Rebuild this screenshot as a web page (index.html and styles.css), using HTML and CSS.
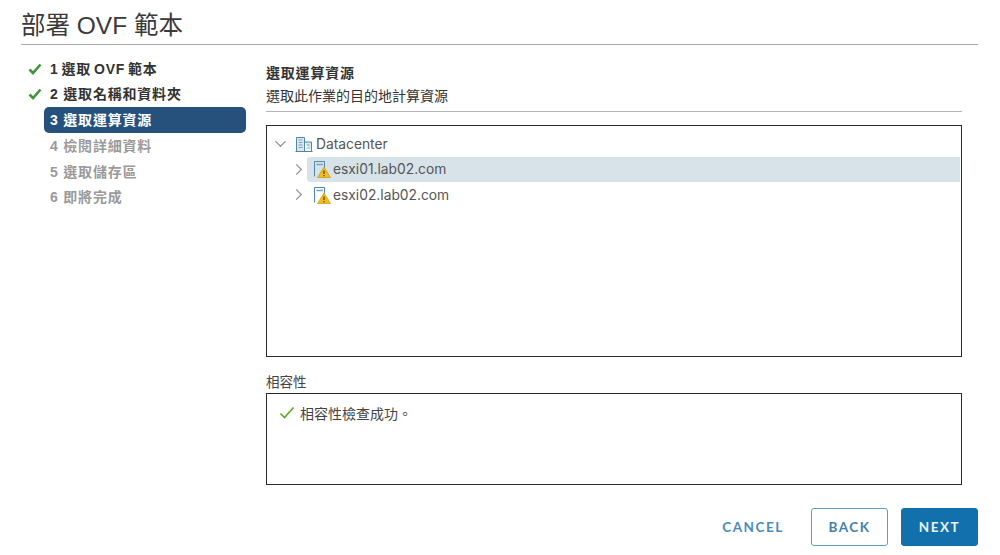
FILE: index.html
```html
<!DOCTYPE html>
<html lang="zh-Hant">
<head>
<meta charset="utf-8">
<title>部署 OVF 範本</title>
<link rel="stylesheet" href="styles.css">
</head>
<body>
<div class="dialog">
  <h1 class="title">部署 OVF 範本</h1>
  <div class="main">
    <nav class="steps">
      <div class="step done tight"><svg class="step-check" viewBox="0 0 14 12"><path d="M1.5 6.5 5 10l7.5-8.5" fill="none" stroke="#3f963c" stroke-width="2.6"/></svg>1 選取 OVF 範本</div>
      <div class="step done"><svg class="step-check" viewBox="0 0 14 12"><path d="M1.5 6.5 5 10l7.5-8.5" fill="none" stroke="#3f963c" stroke-width="2.6"/></svg>2 選取名稱和資料夾</div>
      <div class="step active">3 選取運算資源</div>
      <div class="step off">4 檢閱詳細資料</div>
      <div class="step off">5 選取儲存區</div>
      <div class="step off">6 即將完成</div>
    </nav>
    <section class="content">
      <h2 class="sub-title">選取運算資源</h2>
      <p class="sub-desc">選取此作業的目的地計算資源</p>
      <div class="tree box">
        <div class="node">
          <svg class="caret" viewBox="0 0 14 14"><path d="M1.5 4.5 7 10l5.5-5.5" fill="none" stroke="#8c9298" stroke-width="1.3"/></svg>
          <svg class="icon" viewBox="0 0 18 18"><path d="M1.5 16V2.5h8V16M9.5 7h7v9M.5 16.5h17" fill="#dbe7ef" stroke="#4f87a8" stroke-width="1"/><path d="M3.5 5h4M3.5 7.5h4M3.5 10h4M3.5 12.5h4M11.5 10h3M11.5 13h3" stroke="#7aa3bb" stroke-width="1.2"/></svg>
          <span>Datacenter</span>
        </div>
        <div class="node child">
          <svg class="caret" viewBox="0 0 14 14"><path d="M4.5 1.5 10 7l-5.500 5.500" fill="none" stroke="#8c9298" stroke-width="1.300"/></svg>
          <div class="row selected">
            <svg class="icon" viewBox="0 0 18 18"><path d="M1.500 16.500V1.500h10v6" fill="none" stroke="#4f87a8"/><path d="M3.500 4.500h6.500" stroke="#7aa3bb" stroke-width="1.500"/><path d="M11 7 4.500 17.500h13z" fill="#f2bd1d" stroke="#c9980f" stroke-width=".7"/><path d="M11 10.500v3.500M11 15v1.300" stroke="#3a3000" stroke-width="1.100"/></svg>
            <span>esxi01.lab02.com</span>
          </div>
        </div>
        <div class="node child">
          <svg class="caret" viewBox="0 0 14 14"><path d="M4.500 1.500 10 7l-5.500 5.500" fill="none" stroke="#8c9298" stroke-width="1.300"/></svg>
          <div class="row">
            <svg class="icon" viewBox="0 0 18 18"><path d="M1.500 16.500V1.500h10v6" fill="none" stroke="#4f87a8"/><path d="M3.500 4.500h6.500" stroke="#7aa3bb" stroke-width="1.500"/><path d="M11 7 4.500 17.500h13z" fill="#f2bd1d" stroke="#c9980f" stroke-width=".7"/><path d="M11 10.500v3.500M11 15v1.300" stroke="#3a3000" stroke-width="1.100"/></svg>
            <span>esxi02.lab02.com</span>
          </div>
        </div>
      </div>
      <div class="compat-label">相容性</div>
      <div class="compat box">
        <svg class="compat-check" viewBox="0 0 16 14"><path d="M1.500 7.500 5.500 11.500 14.500 1.500" fill="none" stroke="#62a420" stroke-width="1.600"/></svg>
        <span>相容性檢查成功。</span>
      </div>
    </section>
  </div>
  <div class="footer">
    <button class="btn link">CANCEL</button>
    <button class="btn outline">BACK</button>
    <button class="btn solid">NEXT</button>
  </div>
</div>
</body>
</html>
```
FILE: styles.css
```css
* { box-sizing: border-box; }
html, body { margin: 0; height: 100%; background: #fff; }
body { font-family: "Noto Sans CJK TC", "Noto Sans", sans-serif; color: #2d2d2d; overflow: hidden; }
.dialog { width: 1000px; height: 555px; padding: 8px 22px 0 21px; display: flex; flex-direction: column; }
.title { margin: 0; height: 37px; border-bottom: 1px solid #a9a9a9; font-size: 24.500px; line-height: 36px; font-weight: 400; color: #3a3a3a; font-family: "Liberation Sans", "Noto Sans CJK TC", sans-serif; }
.main { display: flex; flex: 1; min-height: 0; }
.steps { width: 225px; padding: 10.500px 0 0 23px; flex: none; }
.step { position: relative; height: 25.800px; padding-left: 6px; width: 202px; border-radius: 5px; font: 700 14px/26.500px "Liberation Sans", "Noto Sans CJK TC", sans-serif; letter-spacing: .8px; color: #333; }
.tight { word-spacing: -1.800px; }
.step-check { position: absolute; left: -16px; top: 7px; width: 14px; height: 12px; }
.active { background: #25517c; color: #fff; }
.off { color: #9a9a9a; }
.content { width: 696px; margin-left: 20px; padding-top: 18px; flex: none; }
.sub-title { margin: 0; font: 700 14px/18px "Noto Sans CJK TC", sans-serif; letter-spacing: .8px; color: #333; }
.sub-desc { margin: 5px 0 0; height: 26px; border-bottom: 1px solid #b5b5b5; font: 400 14px/18px "Noto Sans CJK TC", sans-serif; color: #333; }
.box { border: 1px solid #2a2a2a; }
.tree { margin-top: 13px; height: 232px; padding: 5px 1px 0 7px; }
.node { display: flex; align-items: center; height: 25.500px; font: 400 13.800px/26px "Inter", sans-serif; color: #555; }
.caret { width: 13px; height: 13px; flex: none; }
.node .icon { width: 18px; height: 18px; flex: none; }
.node > .icon { margin: 0 3px 0 8px; }
.child { padding-left: 18px; }
.child .caret { margin-right: 2px; }
.row { display: flex; align-items: center; flex: 1; height: 25.500px; padding-left: 6px; gap: 2px; border-radius: 3px 0 0 3px; }
.selected { background: #d8e3e9; }
.compat-label { margin-top: 14px; font: 400 13.500px/20px "Noto Sans CJK TC", sans-serif; color: #444; }
.compat { margin-top: 2px; height: 92px; padding: 9px 0 0 12px; display: flex; align-items: flex-start; gap: 5px; font: 400 14px/20px "Noto Sans CJK TC", sans-serif; color: #444; }
.compat-check { width: 16px; height: 14px; margin-top: 3px; flex: none; }
.footer { display: flex; justify-content: flex-end; gap: 13px; padding-bottom: 9px; }
.btn { height: 38px; border-radius: 3px; font: 700 13.500px/36px "Lato", sans-serif; letter-spacing: 1.500px; padding: 0; background: none; border: 1px solid transparent; }
.link { width: 90px; color: #4a8bbd; }
.outline { width: 77px; color: #3f7fae; border-color: #5b9fc9; }
.solid { width: 77px; color: #e8f2f8; background: #1270ad; border-color: #1270ad; }
```
